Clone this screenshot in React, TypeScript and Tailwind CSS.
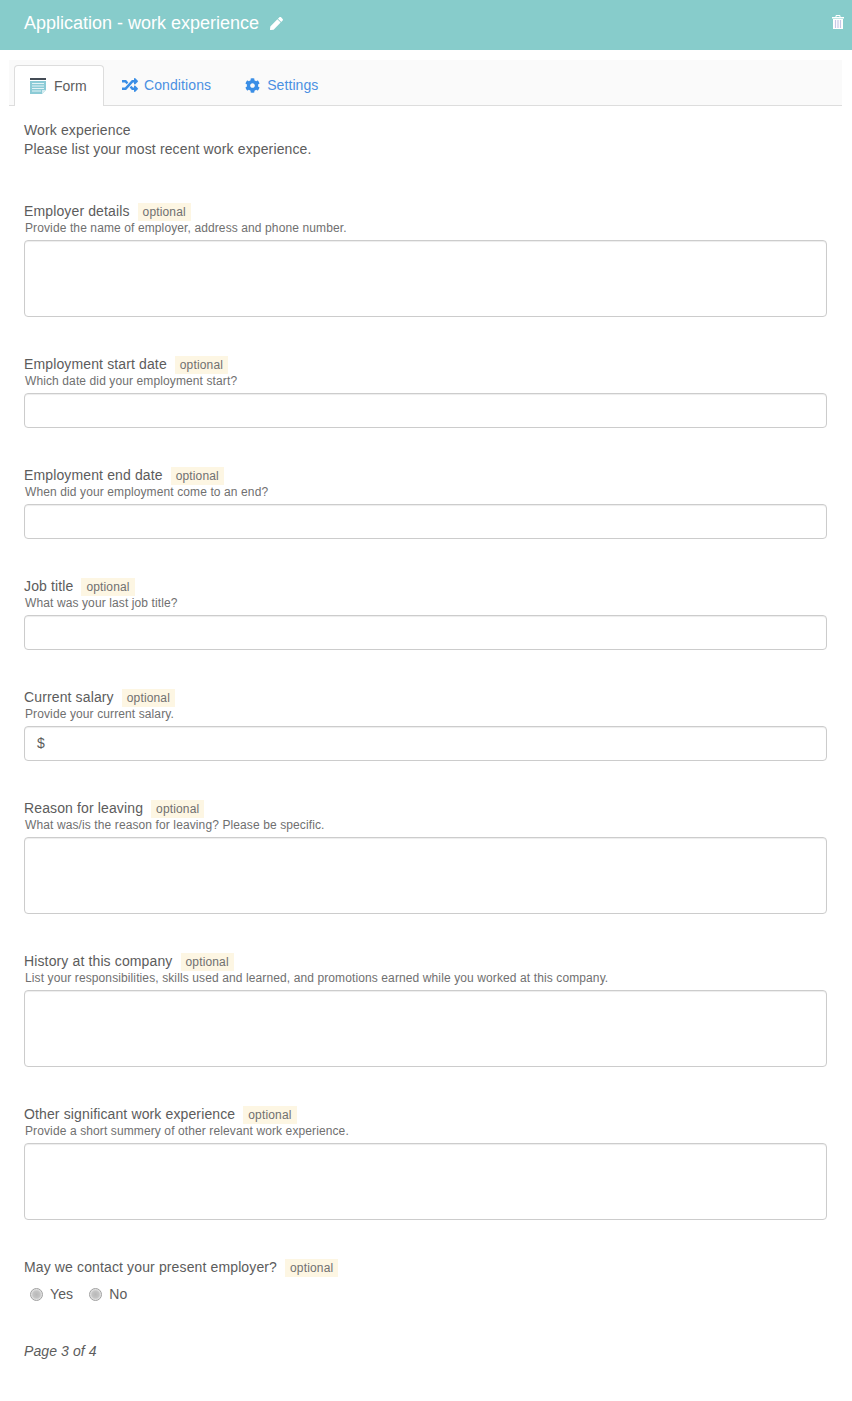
import React from 'react';
import { FaCog, FaPen, FaRandom } from 'react-icons/fa';

type FieldProps = {
  label: string;
  help?: string;
  kind: 'textarea' | 'input' | 'money';
};

const fields: FieldProps[] = [
  { label: 'Employer details', help: 'Provide the name of employer, address and phone number.', kind: 'textarea' },
  { label: 'Employment start date', help: 'Which date did your employment start?', kind: 'input' },
  { label: 'Employment end date', help: 'When did your employment come to an end?', kind: 'input' },
  { label: 'Job title', help: 'What was your last job title?', kind: 'input' },
  { label: 'Current salary', help: 'Provide your current salary.', kind: 'money' },
  { label: 'Reason for leaving', help: 'What was/is the reason for leaving? Please be specific.', kind: 'textarea' },
  {
    label: 'History at this company',
    help: 'List your responsibilities, skills used and learned, and promotions earned while you worked at this company.',
    kind: 'textarea',
  },
  { label: 'Other significant work experience', help: 'Provide a short summery of other relevant work experience.', kind: 'textarea' },
];

// label row with the small "optional" tag
const LabelRow = ({ label }: { label: string }) => (
  <div className="flex h-5 items-center">
    <span className="text-[14px] tracking-[0.13px] text-[#5c5c5c]">{label}</span>
    <span className="ml-2 mt-[2px] flex h-[18px] items-center bg-[#fdf6e3] px-[5px] text-[12px] tracking-[0.15px] text-[#707070]">optional</span>
  </div>
);

const Field = ({ label, help, kind }: FieldProps) => (
  <div className="mb-[37px]">
    <LabelRow label={label} />
    <p className="mb-[3px] ml-px h-4 text-[12px] leading-[15px] tracking-[0.11px] text-[#707070]">{help}</p>
    {kind === 'textarea' ? (
      <div className="h-[77px] rounded border border-[#ccc] bg-white shadow-[inset_0_1px_1px_rgba(0,0,0,0.075)]" />
    ) : (
      <div className="flex h-[35px] items-center rounded border border-[#ccc] bg-white pl-3 text-[14px] text-[#5c5c5c] shadow-[inset_0_1px_1px_rgba(0,0,0,0.075)]">
        {kind === 'money' ? '$' : null}
      </div>
    )}
  </div>
);

const FormIcon = () => (
  <svg width="16" height="16" viewBox="0 0 16 16" className="mr-2">
    <rect x="0" y="0" width="16" height="2" fill="#444c56" />
    <path d="M0 3h16v9l-4 4H0z" fill="#8ccbd6" />
    <path d="M2 5.500h12M2 8h12M2 10.500h12M2 13h9" stroke="#e3f3f6" strokeWidth="1" />
    <path d="M12 16v-4h4z" fill="#d5ecf0" />
  </svg>
);

const TrashIcon = () => (
  <svg width="12" height="14" viewBox="0 0 12 14">
    <path d="M4 2V.5h4V2" fill="none" stroke="#fff" strokeWidth="1" />
    <rect x="0" y="2" width="12" height="1.500" fill="#fff" />
    <path d="M1 4h10v10H1z" fill="#fff" />
    <path d="M3.500 5v8M6 5v8M8.500 5v8" stroke="#c6c6e6" strokeWidth="1.200" />
  </svg>
);

const RadioOption = ({ label }: { label: string }) => (
  <label className="mr-4 flex items-center text-[14px] tracking-[0.13px] text-[#5c5c5c]">
    <input
      type="radio"
      name="contact"
      className="mr-[7px] h-[13px] w-[13px] appearance-none rounded-full border border-[#a0a0a0] bg-[radial-gradient(circle,#b8b8b8_0%,#c4c4c4_45%,#eeeeee_75%,#f4f4f4_100%)]"
    />
    {label}
  </label>
);

export default function App() {
  return (
    <div className="min-h-[1401px] bg-white font-['Liberation_Sans',Arial,sans-serif]">
      <header className="flex h-[50px] items-start justify-between bg-[#87cccb] pl-6 pr-[8px] text-white">
        <div className="mt-[13px] flex items-center">
          <h1 className="text-[18px] leading-5 font-normal">Application - work experience</h1>
          <FaPen className="ml-[11px] h-[13px] w-[13px]" />
        </div>
        <div className="mt-[15px]">
          <TrashIcon />
        </div>
      </header>

      <nav className="mx-[9px] mt-[10px] flex h-[46px] w-[833px] items-end border-b border-[#ddd] bg-[#fafafa] pl-[5px] text-[14px]">
        <div className="-mb-px flex h-[41px] w-[90px] items-center rounded-t border border-b-0 border-[#ddd] bg-white pl-[15px] text-[#5c5c5c]">
          <FormIcon />
          Form
        </div>
        <div className="flex h-10 items-center pl-[18px] tracking-[0.1px] text-[#4a90e2]">
          <FaRandom className="mr-[6px] h-[16px] w-[16px] text-[#3a8ee6]" />
          Conditions
        </div>
        <div className="flex h-10 items-center pl-[34px] tracking-[0.08px] text-[#4a90e2]">
          <FaCog className="mr-[7px] h-[15px] w-[15px] text-[#3a8ee6]" />
          Settings
        </div>
      </nav>

      <main className="box-content w-[803px] pl-6 pt-[15px]">
        <div className="mb-[42px] text-[14px] leading-[19px] tracking-[0.13px] text-[#5c5c5c]">
          <p>Work experience</p>
          <p>Please list your most recent work experience.</p>
        </div>

        {fields.map((f) => (
          <Field key={f.label} {...f} />
        ))}

        <LabelRow label="May we contact your present employer?" />
        <div className="ml-[6px] mt-[7px] flex h-5 items-center">
          <RadioOption label="Yes" />
          <RadioOption label="No" />
        </div>

        <p className="mt-[37px] text-[14px] italic tracking-[0.1px] text-[#5c5c5c]">Page 3 of 4</p>
      </main>
    </div>
  );
}
